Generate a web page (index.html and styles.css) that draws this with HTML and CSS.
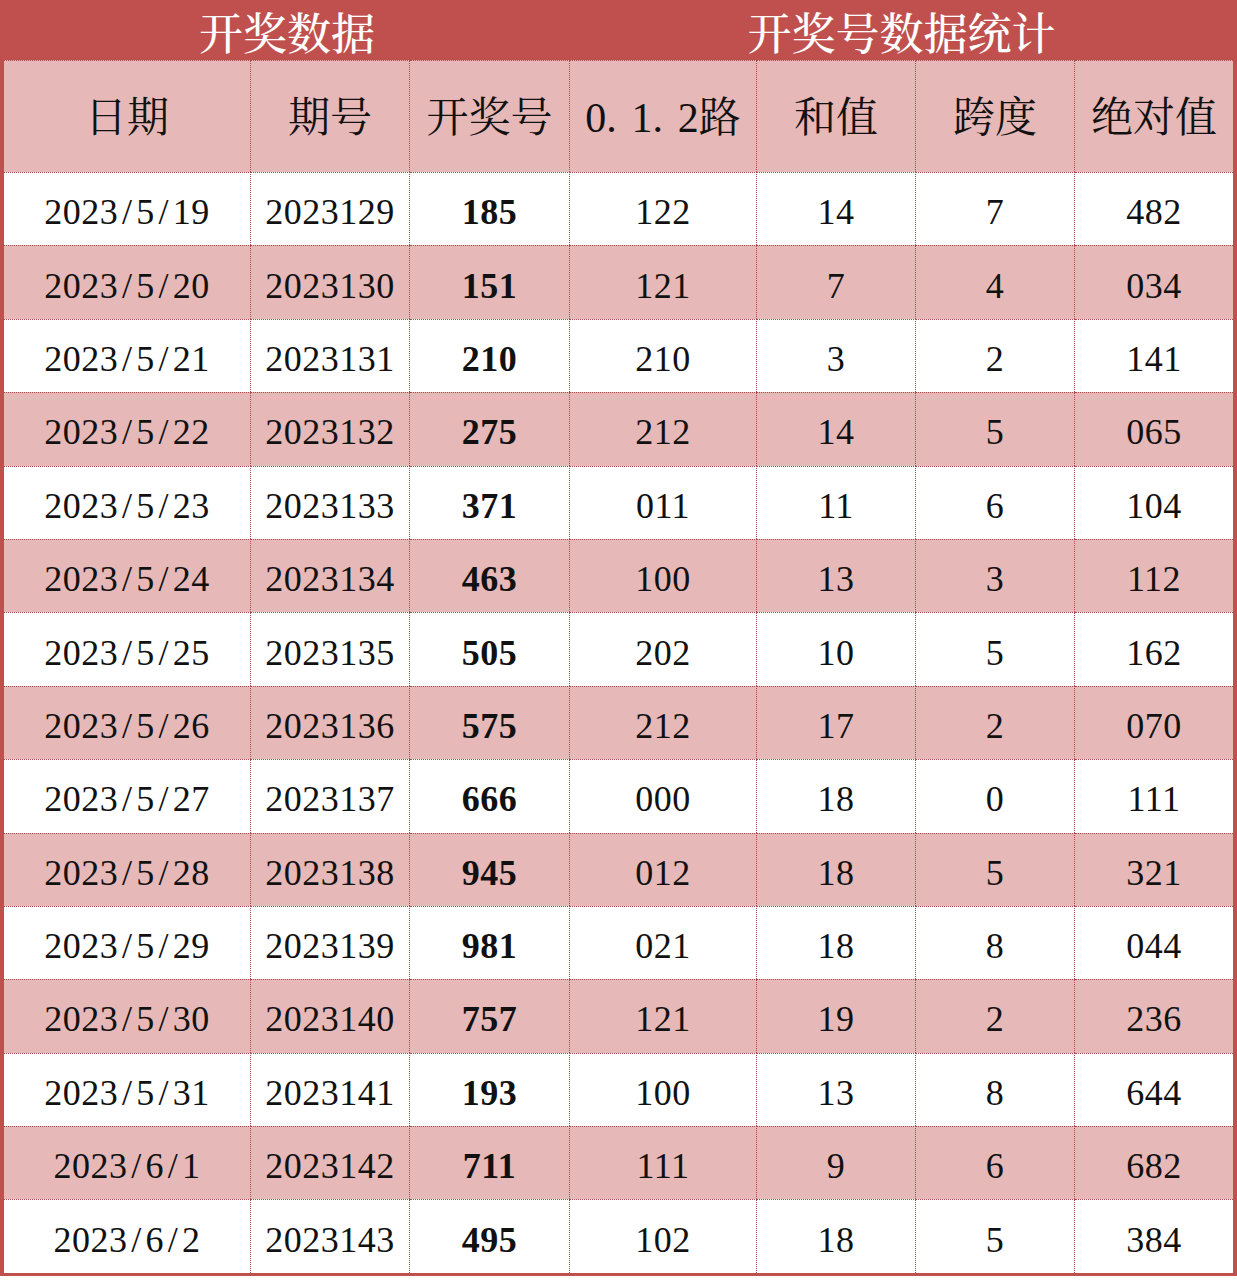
FILE: index.html
```html
<!DOCTYPE html>
<html lang="zh-CN">
<head>
<meta charset="utf-8">
<title>开奖数据</title>
<link rel="stylesheet" href="styles.css">
</head>
<body>
<table class="sheet">
  <colgroup>
    <col class="c-date"><col class="c-issue"><col class="c-num"><col class="c-road"><col class="c-sum"><col class="c-span"><col class="c-abs">
  </colgroup>
  <thead>
    <tr class="title-row">
      <th colspan="3">开奖数据</th>
      <th colspan="4">开奖号数据统计</th>
    </tr>
    <tr class="head-row">
      <th>日期</th><th>期号</th><th>开奖号</th><th>0<span class="dot">.</span>1<span class="dot">.</span>2路</th><th>和值</th><th>跨度</th><th>绝对值</th>
    </tr>
  </thead>
  <tbody>
    <tr><td>2023<span class="sl">/</span>5<span class="sl">/</span>19</td><td>2023129</td><td class="b">185</td><td>122</td><td>14</td><td>7</td><td>482</td></tr>
    <tr class="alt"><td>2023<span class="sl">/</span>5<span class="sl">/</span>20</td><td>2023130</td><td class="b">151</td><td>121</td><td>7</td><td>4</td><td>034</td></tr>
    <tr><td>2023<span class="sl">/</span>5<span class="sl">/</span>21</td><td>2023131</td><td class="b">210</td><td>210</td><td>3</td><td>2</td><td>141</td></tr>
    <tr class="alt"><td>2023<span class="sl">/</span>5<span class="sl">/</span>22</td><td>2023132</td><td class="b">275</td><td>212</td><td>14</td><td>5</td><td>065</td></tr>
    <tr><td>2023<span class="sl">/</span>5<span class="sl">/</span>23</td><td>2023133</td><td class="b">371</td><td>011</td><td>11</td><td>6</td><td>104</td></tr>
    <tr class="alt"><td>2023<span class="sl">/</span>5<span class="sl">/</span>24</td><td>2023134</td><td class="b">463</td><td>100</td><td>13</td><td>3</td><td>112</td></tr>
    <tr><td>2023<span class="sl">/</span>5<span class="sl">/</span>25</td><td>2023135</td><td class="b">505</td><td>202</td><td>10</td><td>5</td><td>162</td></tr>
    <tr class="alt"><td>2023<span class="sl">/</span>5<span class="sl">/</span>26</td><td>2023136</td><td class="b">575</td><td>212</td><td>17</td><td>2</td><td>070</td></tr>
    <tr><td>2023<span class="sl">/</span>5<span class="sl">/</span>27</td><td>2023137</td><td class="b">666</td><td>000</td><td>18</td><td>0</td><td>111</td></tr>
    <tr class="alt"><td>2023<span class="sl">/</span>5<span class="sl">/</span>28</td><td>2023138</td><td class="b">945</td><td>012</td><td>18</td><td>5</td><td>321</td></tr>
    <tr><td>2023<span class="sl">/</span>5<span class="sl">/</span>29</td><td>2023139</td><td class="b">981</td><td>021</td><td>18</td><td>8</td><td>044</td></tr>
    <tr class="alt"><td>2023<span class="sl">/</span>5<span class="sl">/</span>30</td><td>2023140</td><td class="b">757</td><td>121</td><td>19</td><td>2</td><td>236</td></tr>
    <tr><td>2023<span class="sl">/</span>5<span class="sl">/</span>31</td><td>2023141</td><td class="b">193</td><td>100</td><td>13</td><td>8</td><td>644</td></tr>
    <tr class="alt"><td>2023<span class="sl">/</span>6<span class="sl">/</span>1</td><td>2023142</td><td class="b">711</td><td>111</td><td>9</td><td>6</td><td>682</td></tr>
    <tr><td>2023<span class="sl">/</span>6<span class="sl">/</span>2</td><td>2023143</td><td class="b">495</td><td>102</td><td>18</td><td>5</td><td>384</td></tr>
  </tbody>
</table>
</body>
</html>
```
FILE: styles.css
```css
html, body {
  margin: 0;
  padding: 0;
  background: #ffffff;
}

.sheet {
  width: 1237px;
  table-layout: fixed;
  border-collapse: separate;
  border-spacing: 0;
  border-left: 4px solid #c0504d;
  border-right: 4px solid #c0504d;
  border-bottom: 3px solid #c0504d;
  font-family: "Liberation Serif", "Noto Serif CJK SC", "Noto Sans CJK SC", serif;
  color: #111111;
}

.c-date { width: 247px; }
.c-issue { width: 159px; }
.c-num { width: 160px; }
.c-road { width: 187px; }
.c-sum { width: 159px; }
.c-span { width: 159px; }
.c-abs { width: 158px; }

.title-row th {
  height: 60px;
  padding: 12px 0 0;
  box-sizing: border-box;
  background: #c0504d;
  color: #ffffff;
  font-size: 44px;
  font-weight: 500;
  line-height: 1;
  text-align: center;
  vertical-align: middle;
}

.head-row th {
  height: 112px;
  padding: 2px 0 0;
  box-sizing: border-box;
  background: #e6b8b7;
  font-size: 42px;
  font-weight: 400;
  line-height: 1;
  text-align: center;
  vertical-align: middle;
  border-top: 1px dotted #a8494b;
  border-right: 1px dotted #a8494b;
}

.head-row th:last-child,
tbody td:last-child {
  border-right: none;
}

.dot {
  display: inline-block;
  width: 0.6em;
  text-align: left;
}

.sl {
  display: inline-block;
  width: 0.5em;
  text-align: center;
}

tbody td {
  height: 73.4px;
  padding: 6px 0 0;
  box-sizing: border-box;
  font-size: 36px;
  line-height: 1;
  text-align: center;
  vertical-align: middle;
  border-top: 1px dotted #a8494b;
  border-right: 1px dotted #a8494b;
  background: #ffffff;
  letter-spacing: 0.5px;
}

tbody tr.alt td {
  background: #e6b8b7;
}

tbody td.b {
  font-weight: 700;
}
```
